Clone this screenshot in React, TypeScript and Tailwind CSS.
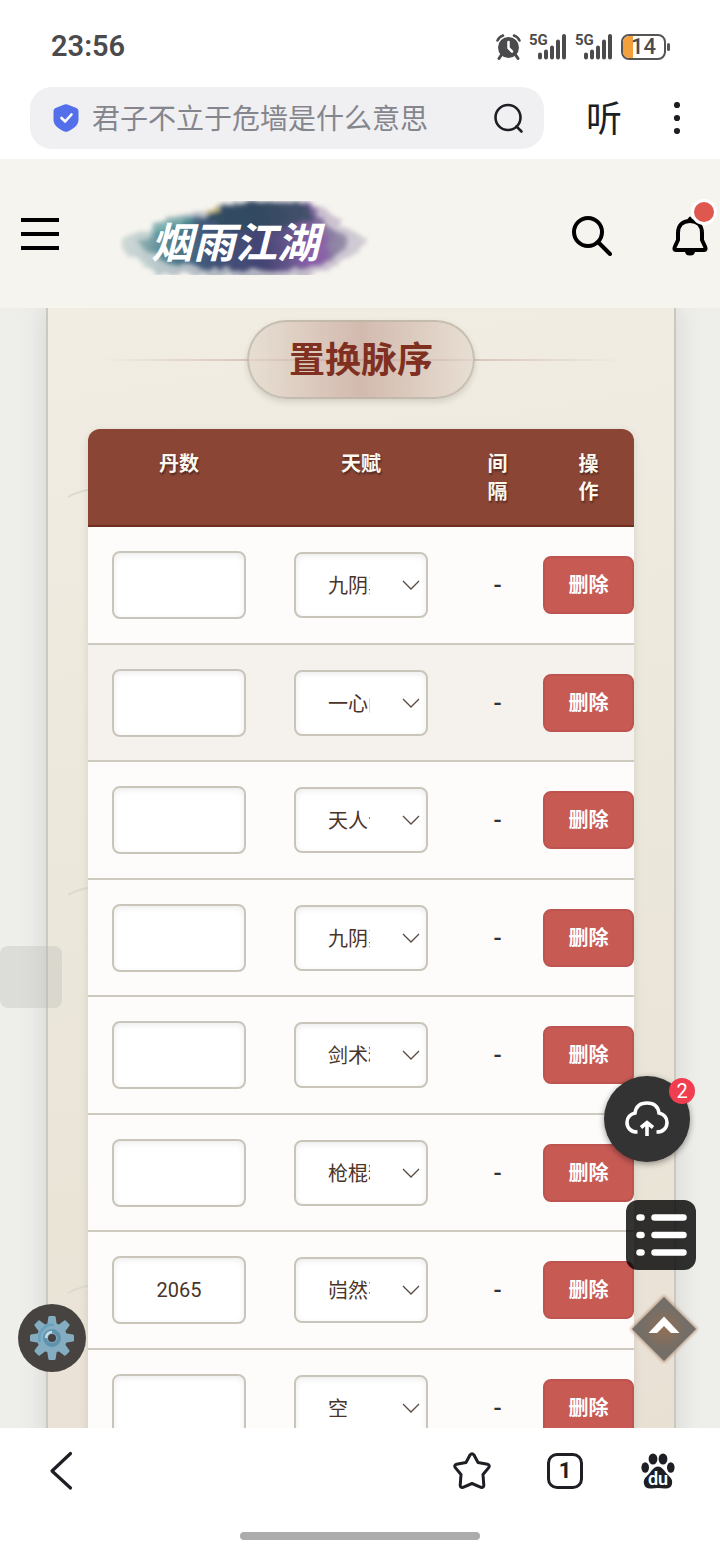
import { useState } from "react";

type Row = { id: number; pills: string; talent: string };

const talents = ["空", "九阴真经", "一心问道", "天人合一", "剑术精通", "枪棍精通", "岿然不动"];

const initialRows: Row[] = [
  { id: 1, pills: "", talent: "九阴真经" },
  { id: 2, pills: "", talent: "一心问道" },
  { id: 3, pills: "", talent: "天人合一" },
  { id: 4, pills: "", talent: "九阴真经" },
  { id: 5, pills: "", talent: "剑术精通" },
  { id: 6, pills: "", talent: "枪棍精通" },
  { id: 7, pills: "2065", talent: "岿然不动" },
  { id: 8, pills: "", talent: "空" },
];

function Signal() {
  return (
    <div className="relative h-7 w-[38px]">
      <span className="absolute left-0 top-0 text-[15px] leading-[14px] font-bold">5G</span>
      <svg className="h-7 w-[38px]" viewBox="0 0 38 28" stroke="currentColor" strokeWidth="4" strokeLinecap="round">
        <path d="M11 21.500v3M17 18.500v6M23 14.500v10M29 8.500v16M35 3v21.500" />
      </svg>
    </div>
  );
}

function StatusBar() {
  return (
    <div className="flex h-[87px] items-center pt-1.5 pr-[50px] pl-[51px] text-[#4b4b4d]">
      <span className="text-[29px] font-semibold">23:56</span>
      <div className="ml-auto flex items-center gap-2">
        <svg className="h-7 w-[25px]" viewBox="0 0 25 28" fill="none" stroke="currentColor">
          <circle cx="12.500" cy="14.500" r="10.500" fill="currentColor" stroke="none" />
          <path d="M1.500 7.500A9 9 0 0 1 7 2.500M23.500 7.500A9 9 0 0 0 18 2.500" strokeWidth="2.500" strokeLinecap="round" />
          <path d="M6 21 3 25.500M19 21 22 25.500" strokeWidth="3" strokeLinecap="round" />
          <path d="M12.500 9v6l3.500 3.500" stroke="#fff" strokeWidth="2.500" strokeLinecap="round" />
        </svg>
        <Signal />
        <Signal />
        <div className="flex items-center gap-px">
          <div className="relative flex h-[26px] w-[45px] items-center justify-center overflow-hidden rounded-lg border-2 border-[#555]">
            <span className="absolute inset-y-0 left-0 w-2.5 bg-[#f2a03c]" />
            <span className="relative text-[22px] leading-5 font-medium">14</span>
          </div>
          <span className="h-2 w-[3px] rounded-sm bg-[#555]" />
        </div>
      </div>
    </div>
  );
}

function AddressBar() {
  return (
    <div className="flex items-center pr-[38px] pb-2.5 pl-[30px] text-[#1e1f24]">
      <form className="flex h-[62px] min-w-0 flex-1 items-center rounded-[22px] bg-[#f0f0f3] pr-5 pl-[22px]">
        <svg className="h-[30px] w-7 shrink-0" viewBox="0 0 28 30">
          <path d="M12.500 1.600q1.500-.6 3 0l9 3.400q2 .8 2 3v8.500c0 6-5 9.300-10.700 11.900q-1.800.8-3.600 0C6.500 25.800 1.500 22.500 1.500 16.500V8q0-2.200 2-3z" fill="#5370ea" />
          <path d="m9.500 15 3.700 3.500 6.300-7" fill="none" stroke="#fff" strokeWidth="2.600" strokeLinecap="round" strokeLinejoin="round" />
        </svg>
        <input
          aria-label="搜索"
          placeholder="君子不立于危墙是什么意思"
          className="ml-3 h-full min-w-0 flex-1 bg-transparent pt-0.5 text-[28px] outline-none placeholder:text-[#85868d]"
        />
        <button type="button" aria-label="搜索" className="shrink-0">
          <svg className="size-[31px]" viewBox="0 0 31 31" fill="none" stroke="currentColor" strokeWidth="2.600" strokeLinecap="round">
            <circle cx="15" cy="14.500" r="12.500" />
            <path d="m23.500 23.500 5 5" />
          </svg>
        </button>
      </form>
      <button className="ml-[42px] pt-1 text-[36px] leading-[52px]">听</button>
      <button aria-label="更多" className="ml-[50px]">
        <svg className="h-8 w-2.5" viewBox="0 0 10 32" fill="currentColor">
          <circle cx="5" cy="3" r="3.100" />
          <circle cx="5" cy="16" r="3.100" />
          <circle cx="5" cy="29" r="3.100" />
        </svg>
      </button>
    </div>
  );
}

function Logo() {
  return (
    <a href="#" className="relative flex h-[74px] w-[250px] items-center">
      <svg className="absolute inset-0 size-full" viewBox="0 0 250 74">
        <defs>
          <linearGradient id="ink" x1="0" x2="1">
            <stop offset="0" stopColor="#8aaeb0" />
            <stop offset=".15" stopColor="#447686" />
            <stop offset=".35" stopColor="#34486f" />
            <stop offset=".6" stopColor="#38386a" />
            <stop offset=".8" stopColor="#705494" />
            <stop offset="1" stopColor="#8f8ba3" />
          </linearGradient>
          <filter id="brush" x="-10%" y="-20%" width="120%" height="140%">
            <feTurbulence type="fractalNoise" baseFrequency=".05 .09" numOctaves="4" seed="7" />
            <feDisplacementMap in="SourceGraphic" scale="14" xChannelSelector="R" yChannelSelector="G" />
            <feGaussianBlur stdDeviation="2" />
          </filter>
        </defs>
        <g filter="url(#brush)">
          <path d="M2 42 20 30l30-14 40-7 30-9h65l25 12 18 14 20 14-14 14-22 14-20 8-50 2-60-2-40-2-25-12z" fill="url(#ink)" opacity=".35" />
          <path d="M20 42 40 28l45-12 36-12h68l18 15 12 12 8 10-14 15-24 11-56 2-54-3-34-5z" fill="url(#ink)" opacity=".9" />
          <path d="M84 16 116 3h68l12 14-30 9-50 3z" fill="#2d4c5a" opacity=".7" />
          <path d="M88 6h12v6H86z" fill="#b0a45e" opacity=".7" />
          <path d="M185 32q20-6 24 10t-16 22q-22-4-8-32z" fill="#8c57ad" opacity=".6" />
          <path d="M30 26q24-12 46-8l-6 12-34 6z" fill="#4e9b9a" opacity=".5" />
        </g>
      </svg>
      <span className="relative pt-3 pl-8 text-[42px] leading-[60px] font-bold text-white italic">烟雨江湖</span>
    </a>
  );
}

function SiteHeader() {
  return (
    <header className="flex h-[149px] shrink-0 items-center bg-[#f6f4ee] pt-1 pr-3 pl-[21px] text-black">
      <button aria-label="菜单" className="flex flex-col gap-2.5 pb-1">
        <span className="h-1 w-[38px] bg-black" />
        <span className="h-1 w-[38px] bg-black" />
        <span className="h-1 w-[38px] bg-black" />
      </button>
      <div className="ml-[60px] pt-1">
        <Logo />
      </div>
      <button aria-label="搜索" className="ml-auto">
        <svg className="size-10" viewBox="0 0 40 40" fill="none" stroke="currentColor" strokeWidth="4">
          <circle cx="16" cy="16" r="14" />
          <path d="m26 26 12 12" strokeLinecap="round" />
        </svg>
      </button>
      <button aria-label="通知" className="relative ml-[60px]">
        <svg className="h-10 w-9" viewBox="0 0 36 40" fill="none" stroke="currentColor" strokeWidth="4" strokeLinejoin="round">
          <path d="M18 5C10 5 6 10 6 17v7L3 30.500Q1.500 34 4 34h28q2.500 0 1-3.500L30 24v-7C30 10 26 5 18 5z" />
          <path d="M13 35h10q0 4.500-5 4.500T13 35z" fill="currentColor" stroke="none" />
          <path d="M16 4 18 1.500 20 4" strokeWidth="2" fill="currentColor" />
        </svg>
        <span className="absolute -top-[17px] -right-[9px] size-[26px] rounded-full border-[3px] border-white bg-[#de5850]" />
      </button>
    </header>
  );
}

function RowItem({ row, onChange, onDelete }: { row: Row; onChange: (row: Row) => void; onDelete: () => void }) {
  return (
    <tr className="h-[118px] border-b-2 border-[#cecabf] bg-[#fdfcfa] nth-2:bg-[#f5f2ed] even:h-[117px]">
      <td className="px-6">
        <input
          aria-label="丹数"
          inputMode="numeric"
          value={row.pills}
          onChange={(e) => onChange({ ...row, pills: e.target.value })}
          className="block h-[68px] w-full rounded-lg border-2 border-[#cac5ba] bg-white text-center text-xl shadow-[inset_0_2px_6px_rgba(0,0,0,0.08)]"
        />
      </td>
      <td className="px-6">
        <div className="relative">
          <select
            aria-label="天赋"
            value={row.talent}
            onChange={(e) => onChange({ ...row, talent: e.target.value })}
            className="block h-[66px] w-full appearance-none rounded-lg border-2 border-[#cac5ba] bg-white pt-0.5 pr-14 pl-8 text-xl shadow-[inset_0_2px_6px_rgba(0,0,0,0.08)]"
          >
            {talents.map((talent) => (
              <option key={talent}>{talent}</option>
            ))}
          </select>
          <svg className="pointer-events-none absolute top-7 right-2 h-2.5 w-[18px]" viewBox="0 0 18 10" fill="none" stroke="#5b4a42" strokeWidth="1.300">
            <path d="m1 1 8 8 8-8" />
          </svg>
        </div>
      </td>
      <td className="text-center text-2xl font-medium text-[#333]">-</td>
      <td>
        <button
          onClick={onDelete}
          className="block h-[58px] w-full rounded-lg border-2 border-[#bd5450] bg-[#c85a54] text-xl font-bold text-white"
        >
          删除
        </button>
      </td>
    </tr>
  );
}

function FloatingTools() {
  return (
    <>
      <div className="absolute bottom-[420px] left-0 h-[62px] w-[62px] rounded-lg bg-[#bbbbb8]/35" />
      <button aria-label="设置" className="absolute bottom-14 left-[18px] flex size-[68px] items-center justify-center rounded-full bg-[#474340]">
        <svg className="size-11" viewBox="-22 -22 44 44">
          <g fill="#84adc2">
            {[0, 45, 90, 135, 180, 225, 270, 315].map((angle) => (
              <path key={angle} d="M-5-12-3.600-21q.2-1 1.200-1h4.800q1 0 1.200 1L5-12z" transform={`rotate(${angle})`} />
            ))}
            <circle r="15" />
          </g>
          <path d="M-12 4A13 13 0 0 1 2-13" fill="none" stroke="#66a2bd" strokeWidth="2.500" />
          <circle r="7" fill="none" stroke="#5f93ad" strokeWidth="4" />
          <path d="M-6 0a6 6 0 0 1 6-6" fill="none" stroke="#c3dce7" strokeWidth="2.500" />
          <circle r="4" fill="#444140" />
        </svg>
      </button>
      <button aria-label="上传" className="absolute right-[30px] bottom-[266px] flex size-[86px] items-center justify-center rounded-full bg-[#333] text-white shadow-[0_2px_6px_rgba(0,0,0,0.4)]">
        <svg className="h-9 w-11" viewBox="0 0 44 36" fill="none" stroke="currentColor" strokeWidth="3.600">
          <path d="M12.500 31C6 31 2 27 2 21.500c0-5 3.500-8.500 8-9.500C11 5 15.500 2 22 2s11 3 12 10c4.500 1 8 4.500 8 9.500C42 27 38 31 31.500 31" />
          <path d="M22 35V22M16 26.500l6-5 6 5" />
        </svg>
        <span className="absolute top-0.5 -right-[5px] flex size-[26px] items-center justify-center rounded-full bg-[#f03e50] text-xl leading-none">2</span>
      </button>
      <button aria-label="目录" className="absolute right-6 bottom-[158px] flex size-[70px] items-center justify-center rounded-xl bg-black/80">
        <svg className="h-[46px] w-[54px]" viewBox="0 0 54 46" stroke="#fff" strokeWidth="6.500" strokeLinecap="round">
          <path d="M5.500 5.500h2M20.500 5.500h29M5.500 23h2M20.500 23h29M5.500 40.500h2M20.500 40.500h29" />
        </svg>
      </button>
      <button aria-label="回到顶部" className="absolute right-[21px] bottom-[64px]">
        <svg className="size-[70px]" viewBox="0 0 70 70">
          <defs>
            <radialGradient id="glow" r=".35">
              <stop offset="0" stopColor="#926f57" />
              <stop offset="1" stopColor="#736e67" />
            </radialGradient>
            <filter id="soft" x="-20%" y="-20%" width="140%" height="140%">
              <feGaussianBlur stdDeviation="1.500" />
            </filter>
          </defs>
          <path d="M35 1 69 35 35 69 1 35z" fill="#a98466" opacity=".7" filter="url(#soft)" />
          <path d="M35 3 67 35 35 67 3 35z" fill="url(#glow)" />
          <path d="m35 22.500 15.500 16.500h-8.500l-7-7-7 7h-8.500z" fill="#fff" />
        </svg>
      </button>
    </>
  );
}

function BottomBar() {
  return (
    <nav className="flex h-[130px] shrink-0 flex-col bg-white text-[#1e1f24]">
      <div className="flex h-[86px] items-center pr-[45px] pl-[49px]">
        <button aria-label="返回">
          <svg className="h-10 w-6" viewBox="0 0 24 40" fill="none" stroke="currentColor" strokeWidth="3.200" strokeLinecap="round" strokeLinejoin="round">
            <path d="M21.500 2.500 3 20l18.500 17" />
          </svg>
        </button>
        <button aria-label="收藏" className="ml-auto">
          <svg className="size-[38px]" viewBox="0 0 38 38" fill="none" stroke="currentColor" strokeWidth="3" strokeLinejoin="round">
            <path d="M17 3q2-2.500 4 0l4 7.500 9.500 1.700q2.700 1 1.200 3.400L30 22.500l.8 10.800q-.2 2.700-2.800 2L19 31.500l-9 3.800q-2.600.7-2.800-2L8 22.500l-5.700-6.900q-1.500-2.400 1.200-3.400l9.500-1.700z" />
          </svg>
        </button>
        <button aria-label="标签页" className="ml-[56px] flex size-9 items-center justify-center rounded-[10px] border-3 border-current text-[22px] leading-none font-bold">1</button>
        <button aria-label="百度" className="relative ml-[58px]">
          <svg className="h-9 w-[34px]" viewBox="0 0 34 36" fill="currentColor">
            <ellipse cx="12" cy="6" rx="4.400" ry="5.500" />
            <ellipse cx="22" cy="6" rx="4.400" ry="5.500" />
            <ellipse cx="4.200" cy="14.500" rx="3.800" ry="5.200" />
            <ellipse cx="29.800" cy="14.500" rx="3.800" ry="5.200" />
            <path d="M17 13.500c4 0 6 4 9 7.500 3 3 6 5 5 10-1 4-4 5-7.500 4.500-4.500-.8-8.500-.8-13 0C7 36 4 35 3 31c-1-5 2-7 5-10 3-3.500 5-7.500 9-7.500z" />
          </svg>
          <span className="absolute inset-x-0 bottom-0.5 text-center text-lg leading-4 font-semibold text-white">du</span>
        </button>
      </div>
      <div className="mx-auto mt-[18px] h-2 w-1/3 rounded-full bg-[#acacac]" />
    </nav>
  );
}

export default function App() {
  const [rows, setRows] = useState<Row[]>(initialRows);

  const updateRow = (next: Row) => {
    setRows((prev) => prev.map((row) => (row.id === next.id ? next : row)));
  };

  return (
    <div className="flex h-screen flex-col overflow-hidden bg-white font-[Roboto,'Noto_Sans_CJK_SC',sans-serif]">
      <StatusBar />
      <AddressBar />
      <SiteHeader />

      <div className="relative min-h-0 flex-1 overflow-hidden bg-[#eeeeea]">
        <main className="pr-11 pl-[46px]">
          <section className="relative border-x-2 border-[#cbc9bf] bg-linear-170 from-[#f1ede3] via-[#ebe7da] to-[#e9e0d4] px-10 pt-3 text-[#4a3428] shadow-[0_0_24px_rgba(90,90,90,0.18)]">
            {/* Faint waves of the paper texture */}
            <svg className="absolute top-0 left-5 h-[1000px] w-8" viewBox="0 0 32 1000" fill="none" stroke="#dfdace" strokeWidth="2">
              <path d="M0 189q12-7 32-9M0 587q12-7 32-9M0 985q12-7 32-9" />
            </svg>

            <div className="relative flex justify-center">
              <div className="absolute inset-x-3 top-[39px] h-0.5 bg-linear-to-r from-transparent via-[#8b4534]/40 to-transparent" />
              <h2 className="relative rounded-full border-2 border-[#b9b3a5]/70 bg-linear-to-r from-[#e3d8cc]/70 via-[#c9a99d]/75 to-[#e3d8cc]/70 px-10 pt-3.5 pb-2.5 text-4xl leading-[51px] font-bold text-[#7f3020] shadow-[0_3px_6px_rgba(0,0,0,0.12)]">
                置换脉序
              </h2>
            </div>

            <div className="relative mt-[30px] overflow-hidden rounded-t-xl shadow-[0_2px_8px_rgba(0,0,0,0.1)]">
              <table className="w-full table-fixed border-collapse">
                <thead>
                  <tr className="border-b-2 border-[#6f3021] bg-[#8a4535] align-top text-xl leading-7 text-[#fdf8ef] [text-shadow:1px_2px_2px_rgba(0,0,0,0.4)]">
                    <th className="w-1/3 pt-[21px] pb-[19px] font-bold">丹数</th>
                    <th className="w-1/3 pt-[21px] pb-[19px] font-bold">天赋</th>
                    <th className="w-1/6 px-8 pt-[21px] pb-[19px] font-bold">间隔</th>
                    <th className="w-1/6 px-8 pt-[21px] pb-[19px] font-bold">操作</th>
                  </tr>
                </thead>
                <tbody>
                  {rows.map((row) => (
                    <RowItem
                      key={row.id}
                      row={row}
                      onChange={updateRow}
                      onDelete={() => setRows((prev) => prev.filter((r) => r.id !== row.id))}
                    />
                  ))}
                </tbody>
              </table>
            </div>
          </section>
        </main>
        <FloatingTools />
      </div>

      <BottomBar />
    </div>
  );
}
